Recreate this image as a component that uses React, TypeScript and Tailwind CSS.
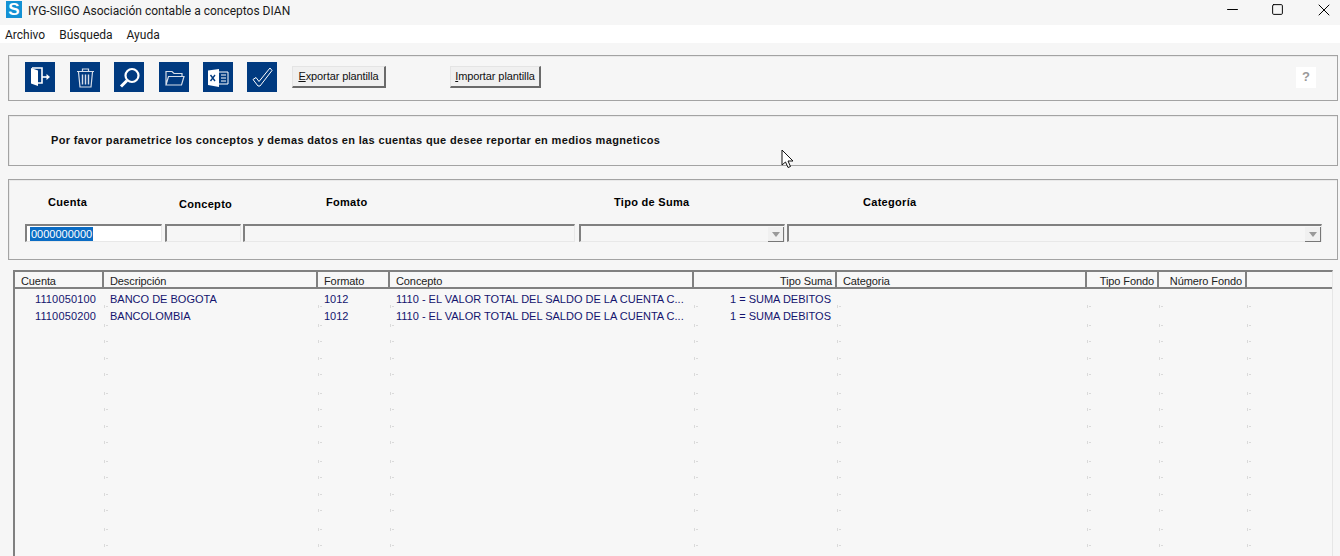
import { Minus, Square, X } from 'lucide-react';

const columns = [
  { name: 'Cuenta', width: 'w-[89px]', align: 'pl-[6px]' },
  { name: 'Descripción', width: 'w-[214px]', align: 'pl-[6px]' },
  { name: 'Formato', width: 'w-[72px]', align: 'pl-[6px]' },
  { name: 'Concepto', width: 'w-[304px]', align: 'pl-[6px]' },
  { name: 'Tipo Suma', width: 'w-[143px]', align: 'justify-end pr-[3px]' },
  { name: 'Categoria', width: 'w-[250px]', align: 'pl-[6px]' },
  { name: 'Tipo Fondo', width: 'w-[72px]', align: 'justify-end pr-[3px]' },
  { name: 'Número Fondo', width: 'w-[88px]', align: 'justify-end pr-[3px]' },
];

const data = [
  ['1110050100', 'BANCO DE BOGOTA', '1012', '1110 - EL VALOR TOTAL DEL SALDO DE LA CUENTA C...', '1 = SUMA DEBITOS'],
  ['1110050200', 'BANCOLOMBIA', '1012', '1110 - EL VALOR TOTAL DEL SALDO DE LA CUENTA C...', '1 = SUMA DEBITOS'],
];

// el alto de las filas no es parejo en la captura
const rowHeights = ['h-[17px]', 'h-[19px]', 'h-[16px]', 'h-[17px]', 'h-[16px]', 'h-[19px]', 'h-[16px]', 'h-[17px]', 'h-[16px]', 'h-[19px]', 'h-[16px]', 'h-[17px]', 'h-[16px]', 'h-[19px]', 'h-[16px]'];

const ToolButton = ({ children, className }: { children: React.ReactNode; className: string }) => (
  <div className={`w-[30px] h-[30px] bg-[#003a80] flex items-center justify-center shrink-0 ${className}`}>
    <svg width="24" height="24" viewBox="0 0 24 24" fill="none" stroke="white" strokeWidth="1.2">
      {children}
    </svg>
  </div>
);

const RaisedButton = ({ hotkey, label, className }: { hotkey: string; label: string; className: string }) => (
  <button className={`h-[22px] bg-[#f0f0f0] border border-t-[#e4e4e4] border-l-[#e4e4e4] border-r-[#6a6a6a] border-b-[#6a6a6a] border-r-2 border-b-2 text-[11px] tracking-[-0.1px] text-[#111] ${className}`}>
    <span className="underline">{hotkey}</span>
    {label}
  </button>
);

const Field = ({ className, arrow, active }: { className: string; arrow?: boolean; active?: boolean }) => (
  <div className={`h-[18px] border-t-2 border-l-2 border-t-[#808080] border-l-[#808080] border-b border-r border-b-[#e8e8e8] border-r-[#e8e8e8] relative ${active ? 'bg-white' : ''} ${className}`}>
    {active && <span className="absolute left-[3px] top-[1px] h-[14px] leading-[14px] px-px bg-[#0a6cc4] text-white text-[11px]">0000000000</span>}
    {arrow && (
      <div className="absolute right-0 top-[1px] w-[16px] h-[15px] bg-[#f0f0f0] border-r border-b border-r-[#777] border-b-[#777] flex items-center justify-center">
        <div className="w-0 h-0 border-x-[4px] border-x-transparent border-t-[5px] border-t-[#999]" />
      </div>
    )}
  </div>
);

export default function App() {
  return (
    <div className="relative w-[1340px] h-[556px] overflow-hidden bg-[#f6f6f6] text-black font-['Liberation_Sans',Arial,sans-serif]">
      {/* barra de titulo */}
      <div className="h-[25px] flex items-center pl-[6px] pb-[6px]">
        <div className="w-[16px] h-[17px] bg-[#1391d4] flex items-center justify-center text-white font-bold text-[17px] leading-none">S</div>
        <span className="ml-[6px] pt-[3px] text-[12px] font-['Roboto',sans-serif] text-[#1a1a1a]">IYG-SIIGO Asociación contable a conceptos DIAN</span>
        <div className="ml-auto flex items-center gap-[30px] pr-[6px]">
          <Minus size={17} strokeWidth={1.4} />
          <Square size={13} strokeWidth={1.8} />
          <X size={20} strokeWidth={1.2} />
        </div>
      </div>

      {/* menu */}
      <div className="h-[18px] pt-[1px] bg-white flex items-center pl-[5px] gap-[14px] text-[12px] font-['Roboto',sans-serif] text-[#1a1a1a]">
        <span>Archivo</span>
        <span>Búsqueda</span>
        <span>Ayuda</span>
      </div>

      {/* barra de herramientas */}
      <div className="ml-[8px] mt-[12px] w-[1330px] h-[46px] pb-[2px] border border-[#a3a3a3] shadow-[inset_1px_1px_0_#e9e9e9] flex items-center pl-[16px] pr-[21px]">
        <ToolButton className="">
          <path d="M3 3l7 2.5V21l-7-2.5z" fill="white" stroke="none" />
          <path d="M4 3h10v15h-4" strokeWidth="1.6" />
          <path d="M14 12h5" strokeWidth="1.6" />
          <path d="M18.5 9 22 12l-3.5 3z" fill="white" stroke="none" />
        </ToolButton>
        <ToolButton className="ml-[15px]">
          <g stroke="#d5dde8">
            <path d="M4 6.5h17M9.5 6V4h6v2M5.5 7l1.5 15h11l1.5-15" />
            <path d="M9.5 9.5v10M12.5 9.5v10M15.5 9.5v10" strokeWidth="1.4" />
          </g>
        </ToolButton>
        <ToolButton className="ml-[14px]">
          <circle cx="15" cy="10.5" r="6.5" strokeWidth="2.2" />
          <path d="M10 15.5 4 21.5" strokeWidth="3" />
        </ToolButton>
        <ToolButton className="ml-[15px]">
          <g stroke="#d5dde8">
            <path d="M4 20V6.5h6l2 2h8v3M4 20l2.5-8.5H22L19.5 20z" />
          </g>
        </ToolButton>
        <ToolButton className="ml-[14px]">
          <path d="M2 5.5 13 4v18L2 20z" fill="white" stroke="none" />
          <path d="M13 7h9v12h-9M15 10h5M15 13h5M15 16h5" strokeWidth="1" />
          <path d="M4.5 10l4.5 6m0-6-4.5 6" stroke="#003a80" strokeWidth="1.4" />
        </ToolButton>
        <ToolButton className="ml-[14px]">
          <path d="M3 14.5l3-2 3 4L20 3l2 2.5L10 21H8z" strokeWidth="1" />
        </ToolButton>
        <RaisedButton hotkey="E" label="xportar plantilla" className="ml-[15px] w-[94px]" />
        <RaisedButton hotkey="I" label="mportar plantilla" className="ml-[64px] w-[91px]" />
        <div className="ml-auto w-[20px] h-[21px] bg-white flex items-center justify-center text-[13px] font-bold text-[#999]">?</div>
      </div>

      {/* mensaje */}
      <div className="ml-[8px] mt-[14px] w-[1330px] h-[51px] border border-[#a3a3a3] shadow-[inset_1px_1px_0_#e9e9e9] flex items-center pl-[42px]">
        <span className="text-[11px] font-bold text-[#111] tracking-[0.35px]">Por favor parametrice los conceptos y demas datos en las cuentas que desee reportar en medios magneticos</span>
      </div>

      {/* filtros */}
      <div className="ml-[8px] mt-[13px] w-[1330px] h-[81px] border border-[#a3a3a3] shadow-[inset_1px_1px_0_#e9e9e9] pl-[16px] flex gap-[2px] pt-[44px] text-[11px] font-bold tracking-[0.3px]">
        <div className="relative">
          <span className="absolute left-[23px] -top-[30px]">Cuenta</span>
          <Field active className="w-[137px] font-normal tracking-normal" />
        </div>
        <div className="relative ml-[1px]">
          <span className="absolute left-[14px] -top-[28px]">Concepto</span>
          <Field className="w-[76px]" />
        </div>
        <div className="relative">
          <span className="absolute left-[83px] -top-[30px]">Fomato</span>
          <Field className="w-[332px]" />
        </div>
        <div className="relative ml-[2px]">
          <span className="absolute left-[35px] -top-[30px]">Tipo de Suma</span>
          <Field arrow className="w-[206px]" />
        </div>
        <div className="relative">
          <span className="absolute left-[76px] -top-[30px]">Categoría</span>
          <Field arrow className="w-[535px]" />
        </div>
      </div>

      {/* tabla */}
      <div className="ml-[13px] mt-[10px] w-[1320px] h-[286px] overflow-hidden border-t-2 border-l-2 border-t-[#808080] border-l-[#808080] border-r border-r-[#e6e6e6] bg-[#f7f7f7]">
        <div className="flex h-[17px] border-b-2 border-b-[#808080]">
          {columns.map((col) => (
            <div key={col.name} className={`${col.width} ${col.align} h-[15px] pt-[3px] flex items-center border-r-2 border-r-[#808080] text-[11px] tracking-[-0.1px] text-[#222] shrink-0`}>
              {col.name}
            </div>
          ))}
        </div>
        <div className="pt-[2px]">
          {rowHeights.map((height, i) => {
            const row = data[i];
            return (
              <div key={i} className={`${height} relative`}>
                {row && (
                  <div className="flex h-[17px] items-center text-[11px] text-[#14146e]">
                    <div className="w-[81px] text-right shrink-0 tracking-[0.15px]">{row[0]}</div>
                    <div className="w-[221px] pl-[14px] shrink-0">{row[1]}</div>
                    <div className="w-[72px] pl-[7px] shrink-0">{row[2]}</div>
                    <div className="w-[304px] pl-[7px] shrink-0 whitespace-nowrap">{row[3]}</div>
                    <div className="w-[138px] text-right shrink-0">{row[4]}</div>
                  </div>
                )}
                <div className="absolute inset-0 flex">
                  {columns.map((col) => (
                    <div key={col.name} className={`${col.width} relative shrink-0`}>
                      <span className="absolute -right-px bottom-[0px] w-px h-[3px] bg-[#dadada]" />
                      <span className="absolute -right-[4px] bottom-[1px] w-[2px] h-px bg-[#dadada]" />
                    </div>
                  ))}
                </div>
              </div>
            );
          })}
        </div>
      </div>

      {/* puntero */}
      <svg className="absolute left-[781px] top-[149px]" width="14" height="20" viewBox="0 0 14 20" fill="white" stroke="#111" strokeWidth="1">
        <path d="M1 1v15l3.5-3 2.5 5.5 2.5-1-2.5-5.5H12z" />
      </svg>
    </div>
  );
}
